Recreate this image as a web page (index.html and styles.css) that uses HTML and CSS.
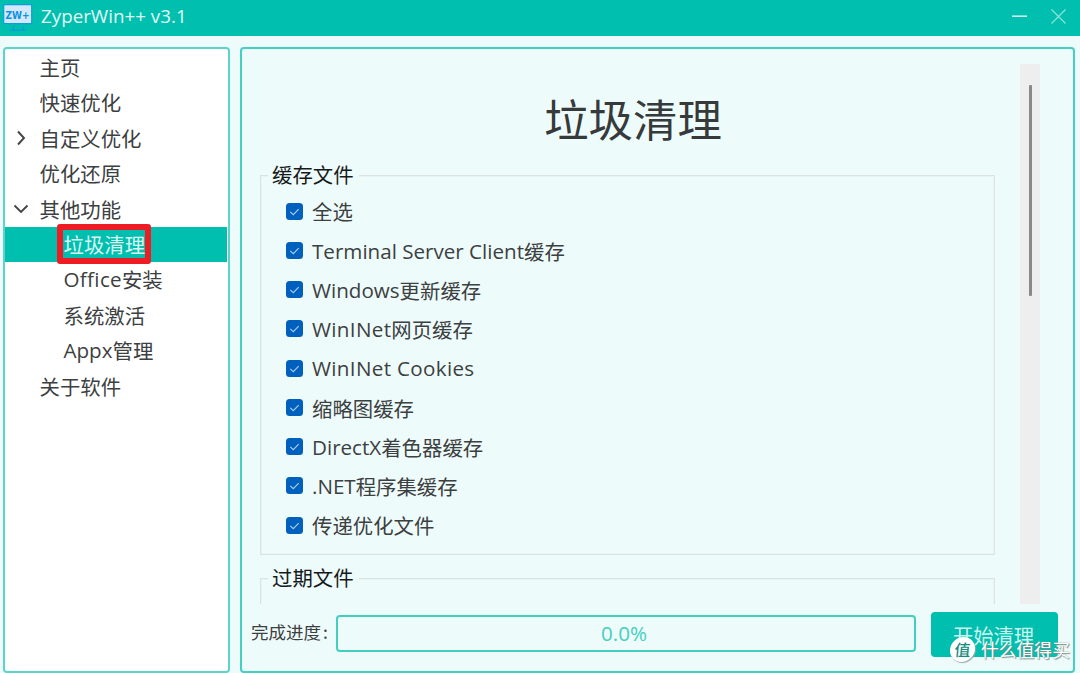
FILE: index.html
```html
<!DOCTYPE html>
<html lang="zh-CN">
<head>
<meta charset="utf-8">
<title>ZyperWin++ v3.1</title>
<link rel="stylesheet" href="styles.css">
</head>
<body>
<svg class="defs" width="0" height="0"><symbol id="check" viewBox="0 0 17 17"><rect width="17" height="17" rx="3.5" fill="#0060bd"/><path d="M4.3 8.9l3 2.7 5.4-5.4" fill="none" stroke="#a9cef0" stroke-width="1.2"/></symbol></svg>
<header class="titlebar">
  <svg class="logo" viewBox="0 0 30 30" width="30" height="30">
    <path d="M10.500 23v4M20 23v4M7 27.200h16" stroke="#0a9bdc" stroke-width="1.3" fill="none"/>
    <rect x=".7" y="1.700" width="28" height="19" rx="1" fill="#d3e8fb" stroke="#0c9ce2" stroke-width="1.2"/>
    <text class="logo-text" x="2.600" y="15.500" textLength="24" lengthAdjust="spacingAndGlyphs">ZW+</text>
  </svg>
  <span class="app-title">ZyperWin++ v3.1</span>
  <svg class="window-buttons" viewBox="0 0 60 36" width="60" height="36"><path d="M0 16.2h15" stroke="#c9f4ef" stroke-width="1.6"/><path d="M39.500 9.500l14 14M53.500 9.500l-14 14" stroke="#8ee3da" stroke-width="1.2"/></svg>
</header>
<div class="workspace">
  <nav class="sidebar">
    <div class="item">主页</div>
    <div class="item">快速优化</div>
    <div class="item"><svg class="arrow" viewBox="0 0 16 16"><path d="M5 1.500l6 6.500-6 6.500"/></svg>自定义优化</div>
    <div class="item">优化还原</div>
    <div class="item"><svg class="arrow" viewBox="0 0 16 16"><path d="M1.500 4.500L8 11l6.500-6.500"/></svg>其他功能</div>
    <div class="item child selected">垃圾清理<i class="highlight"></i></div>
    <div class="item child"><span class="en wide">Office</span>安装</div>
    <div class="item child">系统激活</div>
    <div class="item child"><span class="en">Appx</span>管理</div>
    <div class="item">关于软件</div>
  </nav>
  <main class="panel">
    <div class="scroll">
      <div class="content">
        <h1>垃圾清理</h1>
        <section class="group first">
          <h2>缓存文件</h2>
          <label><svg><use href="#check"/></svg>全选</label>
          <label><svg><use href="#check"/></svg><span class="en">Terminal Server Client</span>缓存</label>
          <label><svg><use href="#check"/></svg><span class="en">Windows</span>更新缓存</label>
          <label><svg><use href="#check"/></svg><span class="en wide">WinINet</span>网页缓存</label>
          <label><svg><use href="#check"/></svg><span class="en wide">WinINet Cookies</span></label>
          <label><svg><use href="#check"/></svg>缩略图缓存</label>
          <label><svg><use href="#check"/></svg><span class="en">DirectX</span>着色器缓存</label>
          <label><svg><use href="#check"/></svg><span class="en">.NET</span>程序集缓存</label>
          <label><svg><use href="#check"/></svg>传递优化文件</label>
        </section>
        <section class="group next"><h2>过期文件</h2></section>
      </div>
      <div class="scrollbar"><div class="thumb"></div></div>
    </div>
    <footer class="footer">
      <span class="label">完成进度<span class="colon">:</span></span>
      <div class="progress">0.0%</div>
      <button class="start">开始清理</button>
    </footer>
  </main>
</div>
<div class="watermark"><span class="badge">值</span><span>什么值得买</span></div>
</body>
</html>
```
FILE: styles.css
```css
* { box-sizing: border-box; }
body {
  margin: 0;
  width: 1080px;
  height: 673px;
  overflow: hidden;
  display: flex;
  flex-direction: column;
  background: #eefbfb;
  color: #3c4041;
  font: 20.4px/1 "Noto Sans CJK SC", sans-serif;
}
.defs { position: absolute; }
.en { font-family: "Open Sans", sans-serif; font-size: 20.6px; }
.wide { letter-spacing: .33px; }
.titlebar {
  height: 36px;
  flex: none;
  display: flex;
  align-items: center;
  padding: 0 8px 0 3px;
  background: #00bfae;
  color: #e2faf7;
}
.logo { flex: none; overflow: visible; }
.logo-text { font: bold 11px "DejaVu Sans", sans-serif; fill: #0b93e2; }
.app-title { margin: -4px auto 0 8px; font: 18.8px/26px "Open Sans", sans-serif; }
.workspace {
  height: 637px;
  display: flex;
  gap: 10px;
  padding: 11px 5px 0 3px;
}
.sidebar {
  width: 227px;
  height: 626px;
  flex: none;
  padding: 1px 1px 0 0;
  background: #fff;
  border: 2px solid #5bd5ca;
  border-radius: 4px;
}
.item {
  position: relative;
  height: 35.4px;
  display: flex;
  align-items: center;
  padding: 0 0 1px 34.5px;
  white-space: nowrap;
}
.item.child { padding-left: 58.5px; }
.selected { background: #00bfae; color: #d9f8f4; }
.arrow {
  width: 16px;
  height: 16px;
  margin: 0 11px 0 -27px;
  fill: none;
  stroke: #444;
  stroke-width: 1.9;
}
.highlight {
  position: absolute;
  left: 52px;
  top: -3px;
  width: 94px;
  height: 40px;
  border: 6px solid #ee1c25;
  border-radius: 3px;
}
.panel {
  flex: 1;
  height: 626px;
  border: 2px solid #43cfc2;
  border-radius: 4px;
  padding: 15px 15px 0 9px;
}
.scroll {
  height: 540px;
  overflow: hidden;
  display: flex;
  justify-content: space-between;
  padding: 0 18px 0 9px;
}
.content { width: 735px; }
h1 {
  margin: 0;
  padding: 32px 0 0 11px;
  height: 111px;
  text-align: center;
  font-size: 44.4px;
  line-height: 44px;
  font-weight: 400;
  color: #363a3b;
}
.group { border: 1px solid #dbe3e3; box-shadow: inset 0 0 0 1px #e9f3f3; position: relative; }
.first { height: 380px; padding: 16px 0 0 25px; }
.next { height: 80px; margin-top: 23px; }
.group h2 {
  position: absolute;
  left: 7px;
  top: -14px;
  margin: 0;
  padding: 0 5px 0 4px;
  background: #eefbfb;
  color: #171a1b;
  font-size: 20.4px;
  line-height: 24px;
  font-weight: 400;
}
label { height: 39.25px; display: flex; align-items: center; white-space: pre; }
label svg { width: 17px; height: 17px; margin: 0 9px 1px 0; }
.scrollbar { width: 20px; background: #eee; padding-top: 21px; }
.thumb { width: 3px; height: 211px; margin-left: 9px; background: #898989; border-radius: 1px; }
.footer { display: flex; align-items: center; height: 58px; }
.label { width: 85px; padding-bottom: 2px; font-size: 17.5px; white-space: nowrap; }
.colon { margin-left: 2px; }
.progress {
  width: 580px;
  height: 37px;
  border: 2px solid #43cfc0;
  border-radius: 4px;
  text-align: center;
  color: #45cfc0;
  font: 20.6px/32px "Open Sans", sans-serif;
  padding-right: 4px;
}
.start {
  width: 127px;
  height: 45px;
  margin: 2px 0 0 15px;
  padding: 2px 2px 0 0;
  border: 0;
  border-radius: 4px;
  background: #00bfae;
  color: #c9f5ef;
  font: 20.3px/1 "Noto Sans CJK SC", sans-serif;
}
.watermark {
  position: absolute;
  left: 950px;
  top: 637px;
  display: flex;
  align-items: center;
  gap: 6px;
  color: #fff;
  font-size: 17.8px;
  white-space: nowrap;
  text-shadow: 1px 1px 1px #78908e, 0 0 1px #78908e;
}
.badge {
  width: 25px;
  height: 25px;
  border-radius: 50%;
  background: #fff;
  color: #168b80;
  font-size: 16px;
  line-height: 24px;
  font-weight: 500;
  text-align: center;
  text-shadow: none;
  transform: skewX(-5deg);
  box-shadow: 1px 1px 1px #92aaa8;
}
```
